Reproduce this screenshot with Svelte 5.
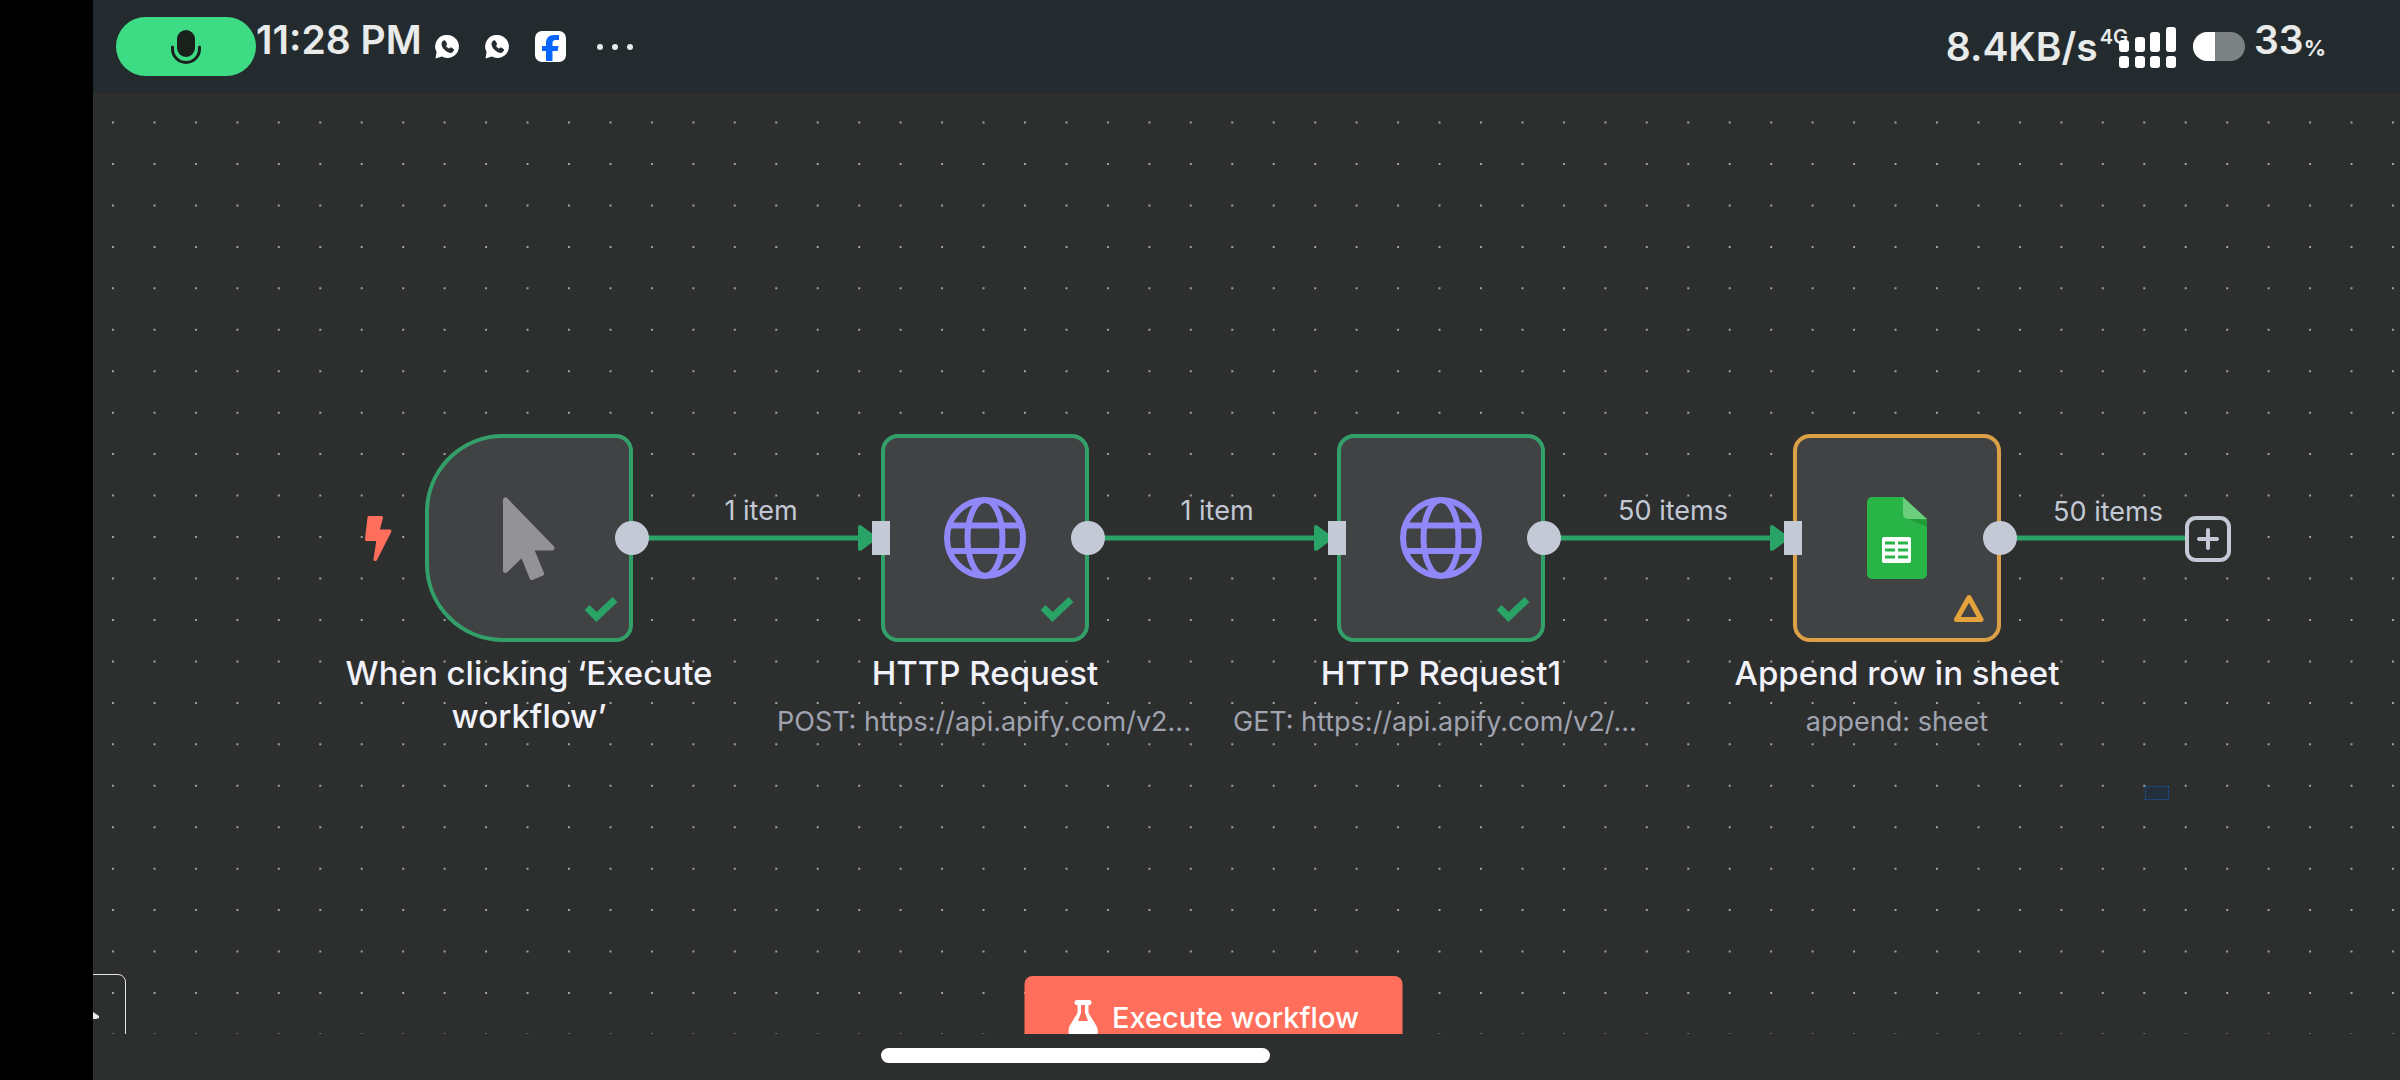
<script lang="ts">
  type Kind = 'cursor' | 'globe' | 'sheet';
  type FlowNode = {
    x: number;
    y: number;
    kind: Kind;
    title: string;
    subtitle?: string;
    clipped?: boolean;
    trigger?: boolean;
    warning?: boolean;
    output: string;
  };

  const nodes: FlowNode[] = [
    { x: 332, y: 341, kind: 'cursor', title: 'When clicking ‘Execute workflow’', trigger: true, output: '1 item' },
    { x: 788, y: 341, kind: 'globe', title: 'HTTP Request', subtitle: 'POST: https://api.apify.com/v2...', clipped: true, output: '1 item' },
    { x: 1244, y: 341, kind: 'globe', title: 'HTTP Request1', subtitle: 'GET: https://api.apify.com/v2/...', clipped: true, output: '50 items' },
    { x: 1700, y: 341, kind: 'sheet', title: 'Append row in sheet', subtitle: 'append: sheet', warning: true, output: '50 items' },
  ];

  // Eleven grid steps separate two neighbouring nodes.
  const step = 456 / 11;
  let width = $state(2400);
  let height = $state(941);
  const dots = $derived.by(() => {
    let d = '';
    for (let y = 29.5; y < height + 2; y += step) {
      for (let x = 20; x < width; x += step) d += `M${x.toFixed(1)} ${y.toFixed(1)}h0`;
    }
    return d;
  });
</script>

<div class="screen">
  <header class="status">
    <div class="side">
      <span class="mic">
        <svg width="32" height="42" viewBox="0 0 32 42" aria-label="Microphone in use">
          <rect x="7" y="4" width="18" height="27" rx="9" fill="#1a211d" />
          <path d="M2.500 21v2a13.500 13.500 0 0 0 27 0v-2" fill="none" stroke="#1a211d" stroke-width="3" stroke-linecap="round" />
        </svg>
      </span>
      <time class="big">11:28 PM</time>
      <div class="notices">
        {#each [0, 1] as n (n)}
          <svg width="24" height="24" viewBox="0 0 24 24" aria-label="WhatsApp">
            <path d="M12.500 0a11.500 11.500 0 1 1-5.600 21.600L.500 23.500 1.600 17A11.500 11.500 0 0 1 12.500 0Z" fill="#fff" />
            <path d="M7.500 7c1-1.600 2.500-1.700 3.100-.3l.9 2.200c.2.700-1 1.600-.9 2.100.7 1.400 1.800 2.400 3.300 3 .6.100 1.300-1.400 2-1.100l2.200 1.100c1 .6.300 2.300-.9 3-1.500.8-3.300.4-5.600-1-3.500-2.300-5.600-6-4.100-9Z" fill="#242b2e" stroke="#242b2e" />
          </svg>
        {/each}
        <svg width="31" height="31" viewBox="0 0 31 31" aria-label="Facebook">
          <rect width="31" height="31" rx="7" fill="#fff" />
          <path d="M11 30V20H7v-5h4v-3c0-5 3-8 8-8h5v5h-3c-2.600 0-3.500 1-3.500 3v3h6l-.8 5h-5.200v10Z" fill="#0866ff" />
        </svg>
        <svg class="more" width="38" height="8" viewBox="0 0 38 8" aria-label="More notifications">
          <circle cx="4" cy="4" r="3" fill="#e9ebeb" /><circle cx="19" cy="4" r="3" fill="#e9ebeb" /><circle cx="34" cy="4" r="3" fill="#e9ebeb" />
        </svg>
      </div>
    </div>
    <div class="side">
      <span class="speed">8.4KB/s</span>
      <span class="net">4G</span>
      <svg class="signal" width="58" height="42" viewBox="0 0 58 42" fill="#fff" aria-label="Signal">
        <rect x="0" y="13" width="10" height="12" rx="3" /><rect x="16" y="10" width="10" height="15" rx="3" /><rect x="31" y="5" width="10" height="20" rx="3" /><rect x="47" y="0" width="10" height="25" rx="3" />
        <rect x="0" y="29" width="10" height="12" rx="3" /><rect x="16" y="29" width="10" height="12" rx="3" /><rect x="31" y="29" width="10" height="12" rx="3" /><rect x="47" y="29" width="10" height="12" rx="3" />
      </svg>
      <span class="battery"><span></span></span>
      <span class="level">33<span class="unit">%</span></span>
    </div>
  </header>

  <main class="canvas" bind:clientWidth={width} bind:clientHeight={height}>
    <svg class="layer" aria-hidden="true">
      <path d={dots} stroke="#a0a1a1" stroke-width="2" stroke-linecap="square" />
      {#each nodes as node, i}
        <path d="M{node.x + 208} 445h{i < 3 ? 236 : 186}" stroke="#2aa367" stroke-width="5" />
        {#if i < 3}
          <path d="M{node.x + 435} 434v22l15-11Z" fill="#2aa367" stroke="#2aa367" stroke-width="4" stroke-linejoin="round" />
        {/if}
      {/each}
    </svg>

    <svg class="bolt" width="29" height="48" viewBox="0 0 29 48" aria-hidden="true">
      <path d="M5 3.500h12.500L14 17h12L11.500 45.500h-.5L14 25.500H2.500Z" fill="#ff6f5c" stroke="#ff6f5c" stroke-width="3" stroke-linejoin="round" />
    </svg>

    {#each nodes as node, i}
      <article class="node" style:left="{node.x}px" style:top="{node.y}px">
        <div class="box" class:trigger={node.trigger} class:warning={node.warning}>
          {#if node.kind === 'cursor'}
            <svg width="82" height="84" viewBox="0 0 82 84" aria-hidden="true">
              <path d="M17.500 4v70.500L34.500 58 44 81.500l9.500-4L43 52h21Z" fill="#929297" stroke="#929297" stroke-width="5" stroke-linejoin="round" />
            </svg>
          {:else if node.kind === 'globe'}
            <svg width="82" height="82" viewBox="0 0 82 82" fill="none" stroke="#9088f8" stroke-width="6" aria-hidden="true">
              <circle cx="41" cy="41" r="38" /><ellipse cx="41" cy="41" rx="17.500" ry="38" /><path d="M6 28.500h70M6 54h70" />
            </svg>
          {:else}
            <svg width="60" height="82" viewBox="0 0 60 82" aria-hidden="true">
              <path d="M5 0h31l24 23v54a5 5 0 0 1-5 5H5a5 5 0 0 1-5-5V5a5 5 0 0 1 5-5Z" fill="#28b446" />
              <path d="m39 21 21 9v-7Z" fill="#219b3a" />
              <path d="M36 0v17a5 5 0 0 0 5 5h19Z" fill="#6ace7c" />
              <rect x="15" y="40" width="29" height="26" rx="2" fill="#fff" />
              <path d="M18 46h10M31 46h10M18 53h10M31 53h10M18 60h10M31 60h10" stroke="#28b446" stroke-width="3" />
            </svg>
          {/if}
          {#if node.warning}
            <svg class="state" width="34" height="30" viewBox="0 0 34 30" aria-label="Warning">
              <path d="M17 3.500 29 25.500H4.500Z" fill="none" stroke="#e5a33d" stroke-width="5" stroke-linejoin="round" />
            </svg>
          {:else}
            <svg class="state" width="34" height="30" viewBox="0 0 34 30" aria-label="Success">
              <path d="m3 13.500 9.500 9.500L31 5.500" fill="none" stroke="#2aa367" stroke-width="7" />
            </svg>
          {/if}
          {#if !node.trigger}<span class="input"></span>{/if}
          <span class="output"></span>
        </div>
        <h2>{node.title}</h2>
        {#if node.subtitle}<p class:clipped={node.clipped}>{node.subtitle}</p>{/if}
        <span class="count" class:last={i === 3}>{node.output}</span>
      </article>
    {/each}

    <button class="add" aria-label="Add node">
      <svg width="22" height="22" viewBox="0 0 22 22" aria-hidden="true"><path d="M11 2v18M2 11h18" stroke="#c3c9d5" stroke-width="4" stroke-linecap="round" /></svg>
    </button>
    <span class="selection"></span>

    <button class="control" aria-label="Canvas controls">
      <svg width="8" height="10" viewBox="0 0 8 10" aria-hidden="true"><path d="M0 0 6 4v2L3 7H0Z" fill="#e9edf2" /></svg>
    </button>
    <button class="execute">
      <svg width="30" height="34" viewBox="0 0 30 34" aria-hidden="true">
        <path d="M8 0h13q2 0 2 2.500T21 5h-1v8l8 13q2 4 1 8H0q-1-4 1-8l8-13V5H8q-2 0-2-2.500T8 0ZM12.500 5v8l-3 8h10l-3-8V5Z" fill="#fff" fill-rule="evenodd" />
      </svg>
      Execute workflow
    </button>
  </main>

  <footer><span></span></footer>
</div>

<style>
  :global(body) { background: #000; }
  .screen {
    box-sizing: border-box;
    min-height: 100vh;
    padding-left: 93px;
    display: flex;
    flex-direction: column;
    font-family: Inter, 'Liberation Sans', sans-serif;
    background: linear-gradient(90deg, #000 93px, #2d2e2e 93px);
  }
  .status {
    height: 93px;
    padding: 0 74px 0 23px;
    box-sizing: border-box;
    display: flex;
    justify-content: space-between;
    background: #242b2e;
    color: #e9ebeb;
  }
  .side { display: flex; align-items: center; }
  .mic {
    width: 140px;
    height: 59px;
    border-radius: 30px;
    background: #3ddc84;
    display: grid;
    place-items: center;
  }
  .big, .speed, .level { font-size: 39px; font-weight: 600; line-height: 48px; white-space: nowrap; }
  .big, .level { padding-bottom: 14px; }
  .level { display: flex; align-items: flex-end; }
  .unit { font-size: 22px; font-weight: 700; line-height: 32px; }
  .notices { display: flex; align-items: center; gap: 26px; margin-left: 13px; }
  .more { margin-left: 4px; }
  .net { font-size: 20px; font-weight: 600; padding-bottom: 20px; margin: 0 -9px 0 2px; }
  .signal { margin-top: 2px; }
  .battery {
    width: 52px;
    height: 29px;
    margin: 0 9px 0 16px;
    border-radius: 15px;
    overflow: hidden;
    background: #7c8183;
  }
  .battery span { display: block; width: 22px; height: 100%; background: #fff; }

  .canvas { position: relative; flex: 1; overflow: hidden; }
  .layer { position: absolute; inset: 0 auto auto 0; width: 100%; height: 100%; overflow: hidden; }
  .node { position: absolute; width: 208px; }
  .box {
    position: relative;
    box-sizing: border-box;
    width: 208px;
    height: 208px;
    border: 4px solid #33a06a;
    border-radius: 17px;
    background: #414244;
    display: grid;
    place-items: center;
  }
  .trigger { border-radius: 78px 17px 17px 78px; }
  .warning { border-color: #dca046; }
  .state { position: absolute; right: 11px; bottom: 14px; }
  .input, .output { position: absolute; background: #c3c9d5; }
  .input { left: -13px; top: 83px; width: 18px; height: 34px; }
  .output { right: -20px; top: 83px; width: 34px; height: 34px; border-radius: 50%; }
  h2, p { margin: 0 -104px; text-align: center; }
  h2 { margin-top: 10px; font-size: 33px; font-weight: 500; line-height: 43px; color: #f2f2fa; }
  p { margin-top: 5px; font-size: 27px; line-height: 43px; color: #a0a3b0; white-space: nowrap; }
  p.clipped { text-align: left; }
  .count {
    position: absolute;
    left: 208px;
    top: 61px;
    width: 256px;
    text-align: center;
    font-size: 27px;
    line-height: 32px;
    color: #c3c9d5;
  }
  .count.last { top: 62px; width: 214px; }
  .bolt { position: absolute; left: 271px; top: 421px; }
  .add {
    position: absolute;
    left: 2092px;
    top: 423px;
    width: 46px;
    height: 46px;
    padding: 0;
    display: grid;
    place-items: center;
    border: 4px solid #c3c9d5;
    border-radius: 11px;
    background: #2d2e2e;
  }
  .selection {
    position: absolute;
    left: 2052px;
    top: 693px;
    width: 22px;
    height: 12px;
    border: 1px dotted #1459b3;
    background: #242f3c;
  }
  .control {
    position: absolute;
    left: -53px;
    bottom: -26px;
    width: 86px;
    height: 86px;
    padding: 0 0 0 52px;
    text-align: left;
    border: 1px solid #e4e4ec;
    border-radius: 8px;
    background: transparent;
  }
  .execute {
    position: absolute;
    left: calc(50% - 33px);
    bottom: -26px;
    transform: translateX(-50%);
    height: 84px;
    padding: 0 44px 2px;
    display: flex;
    align-items: center;
    gap: 14px;
    border: 0;
    border-radius: 8px;
    background: #ff6f5c;
    color: #fff;
    font: 500 29px Inter, 'Liberation Sans', sans-serif;
    white-space: nowrap;
  }
  footer { height: 46px; padding-right: 342px; display: flex; justify-content: center; }
  footer span { width: 389px; height: 15px; margin-top: 14px; border-radius: 8px; background: #fff; }
</style>
